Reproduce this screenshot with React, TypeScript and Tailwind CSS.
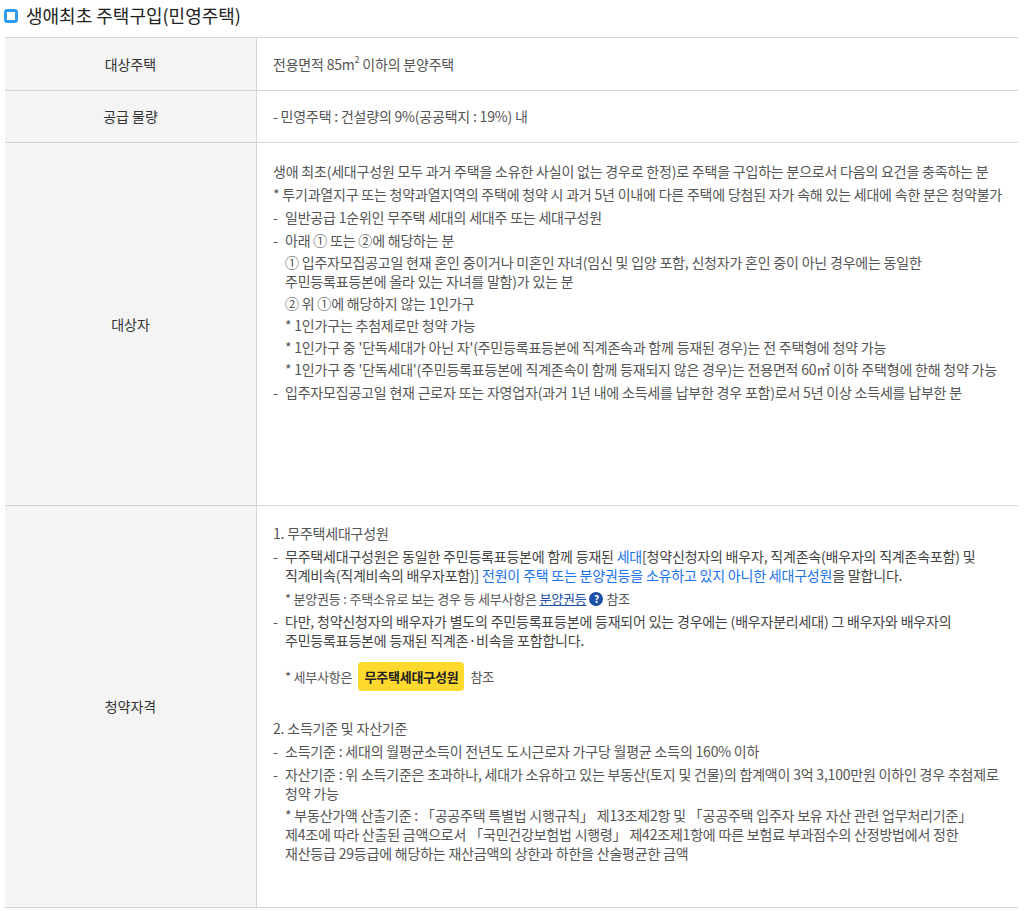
const font = { fontFamily: '"Noto Sans CJK KR", "Noto Sans", sans-serif' };

function Row({ label, children, h }: { label: string; children: React.ReactNode; h?: string }) {
  return (
    <div className={`flex border-b border-[#d6d6d6] ${h ?? ""}`}>
      <div className="flex w-[252px] shrink-0 items-center justify-center border-r border-[#d6d6d6] bg-[#f4f4f4] text-[14px] text-[#333]">
        {label}
      </div>
      <div className="flex-1 break-keep pl-[16px] pr-[14px] text-[14px] leading-[19px] tracking-[-0.2px] text-[#555]">
        {children}
      </div>
    </div>
  );
}

function Dash({ children }: { children: React.ReactNode }) {
  return (
    <div className="flex">
      <span className="w-[12px] shrink-0">-</span>
      <div className="flex-1">{children}</div>
    </div>
  );
}

export default function App() {
  return (
    <div className="min-h-[911px] bg-white pl-[5px] pr-[6px]" style={font}>
      <div className="flex h-[37px] items-center gap-[8px] pb-[6px]">
        <span className="ml-[-1px] h-[14px] w-[14px] rounded-[3px] border-[3px] border-[#2d9cf0] bg-white" />
        <h1 className="text-[18px] text-[#222]">생애최초 주택구입(민영주택)</h1>
      </div>
      <div className="border-t border-[#d6d6d6]">
        <Row label="대상주택" h="h-[53px]">
          <div className="flex h-full items-center">
            전용면적 85m<sup className="text-[9px]">2</sup>&nbsp;이하의 분양주택
          </div>
        </Row>
        <Row label="공급 물량" h="h-[52px]">
          <div className="flex h-full items-center">- 민영주택 : 건설량의 9%(공공택지 : 19%) 내</div>
        </Row>
        <Row label="대상자" h="h-[363px]">
          <div className="flex flex-col gap-[4px] pt-[19px]">
            <div>
              생애 최초(세대구성원 모두 과거 주택을 소유한 사실이 없는 경우로 한정)로 주택을 구입하는 분으로서 다음의 요건을 충족하는 분
            </div>
            <div>
              * 투기과열지구 또는 청약과열지역의 주택에 청약 시 과거 5년 이내에 다른 주택에 당첨된 자가 속해 있는 세대에 속한 분은 청약불가
            </div>
            <Dash>일반공급 1순위인 무주택 세대의 세대주 또는 세대구성원</Dash>
            <Dash>
              <div className="flex flex-col gap-[3px]">
                <div>아래 ① 또는 ②에 해당하는 분</div>
                <div className="flex flex-col gap-[3px]">
                  <div>
                    ① 입주자모집공고일 현재 혼인 중이거나 미혼인 자녀(임신 및 입양 포함, 신청자가 혼인 중이 아닌 경우에는 동일한 주민등록표등본에 올라 있는 자녀를 말함)가 있는 분
                  </div>
                  <div>② 위 ①에 해당하지 않는 1인가구</div>
                  <div>* 1인가구는 추첨제로만 청약 가능</div>
                  <div>* 1인가구 중 '단독세대가 아닌 자'(주민등록표등본에 직계존속과 함께 등재된 경우)는 전 주택형에 청약 가능</div>
                  <div>
                    * 1인가구 중 '단독세대'(주민등록표등본에 직계존속이 함께 등재되지 않은 경우)는 전용면적 60㎡ 이하 주택형에 한해 청약 가능
                  </div>
                </div>
              </div>
            </Dash>
            <Dash>
              입주자모집공고일 현재 근로자 또는 자영업자(과거 1년 내에 소득세를 납부한 경우 포함)로서 5년 이상 소득세를 납부한 분
            </Dash>
          </div>
        </Row>
        <Row label="청약자격" h="h-[402px]">
          <div className="flex flex-col gap-[4px] pt-[18px]">
            <div>1. 무주택세대구성원</div>
            <Dash>
              <div className="text-[#444]">
                무주택세대구성원은 동일한 주민등록표등본에 함께 등재된 <span className="text-[#1a73e8]">세대</span>
                [청약신청자의 배우자, 직계존속(배우자의 직계존속포함) 및 직계비속(직계비속의 배우자포함)]{" "}
                <span className="text-[#1a73e8]">전원이 주택 또는 분양권등을 소유하고 있지 아니한 세대구성원</span>을
                말합니다.
              </div>
              <div className="mt-[4px] flex items-center text-[13px]">
                * 분양권등 : 주택소유로 보는 경우 등 세부사항은&nbsp;
                <span className="text-[#1d4fa8] underline">분양권등</span>
                <span className="mx-[3px] flex h-[14px] w-[14px] items-center justify-center rounded-full bg-[#1d4fa8] text-[10px] font-bold text-white">
                  ?
                </span>
                참조
              </div>
            </Dash>
            <Dash>
              <div className="text-[#444]">
                다만, 청약신청자의 배우자가 별도의 주민등록표등본에 등재되어 있는 경우에는 (배우자분리세대) 그 배우자와 배우자의 주민등록표등본에 등재된 직계존·비속을 포함합니다.
              </div>
              <div className="mt-[12px] flex items-center text-[13px]">
                * 세부사항은
                <span className="mx-[6px] rounded-[4px] bg-[#ffd92e] px-[6px] py-[5px] font-bold text-[#222]">
                  무주택세대구성원
                </span>
                참조
              </div>
            </Dash>
            <div className="mt-[24px]">2. 소득기준 및 자산기준</div>
            <Dash>소득기준 : 세대의 월평균소득이 전년도 도시근로자 가구당 월평균 소득의 160% 이하</Dash>
            <Dash>
              <div>자산기준 : 위 소득기준은 초과하나, 세대가 소유하고 있는 부동산(토지 및 건물)의 합계액이 3억 3,100만원 이하인 경우 추첨제로 청약 가능</div>
              <div className="mt-[3px]">
                * 부동산가액 산출기준 : 「공공주택 특별법 시행규칙」 제13조제2항 및 「공공주택 입주자 보유 자산 관련 업무처리기준」 제4조에 따라 산출된 금액으로서 「국민건강보험법 시행령」 제42조제1항에 따른 보험료 부과점수의 산정방법에서 정한 재산등급 29등급에 해당하는 재산금액의 상한과 하한을 산술평균한 금액
              </div>
            </Dash>
          </div>
        </Row>
      </div>
    </div>
  );
}
